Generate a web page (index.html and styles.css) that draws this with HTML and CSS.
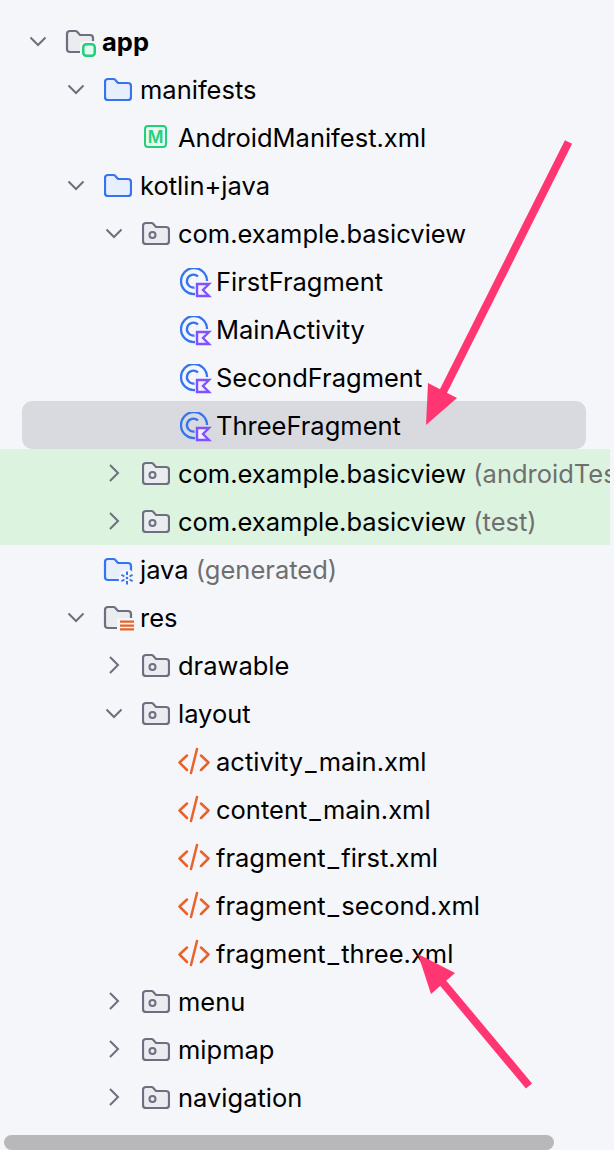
FILE: index.html
```html
<!DOCTYPE html>
<html lang="en">
<head>
  <meta charset="UTF-8" />
  <title>Project tree</title>
  <link rel="stylesheet" href="styles.css">
</head>
<body>
  <svg class="defs" width="0" height="0">
    <defs>
      <symbol id="down" viewBox="0 0 24 24"><path d="M4.500 8.500 12 16l7.500-7.500"/></symbol>
      <symbol id="right" viewBox="0 0 24 24"><path d="M8 4l8 8-8 8"/></symbol>
      <path id="folder-shape" d="M1 7a3 3 0 0 1 3-3h5.500a2 2 0 0 1 1.400.600L14 8h10a3 3 0 0 1 3 3v11a3 3 0 0 1-3 3H4a3 3 0 0 1-3-3z"/>
      <symbol id="folder-blue" viewBox="0 0 28 28"><use href="#folder-shape" class="fold-blue"/></symbol>
      <symbol id="package" viewBox="0 0 28 28">
        <use href="#folder-shape" class="fold-gray"/>
        <circle class="pkg-dot" cx="10.500" cy="16" r="3"/>
      </symbol>
      <symbol id="kt-class" viewBox="0 0 32 32">
        <path class="cls-arc" d="M15 26A13 13 0 1 1 27 13"/>
        <path class="cls-arc" d="M18 8.500A6.500 6.500 0 1 0 14.500 19.500"/>
        <path class="kt-badge" d="M17 16h12l-6 6 6 6H17z"/>
      </symbol>
      <symbol id="xml" viewBox="0 0 32 32">
        <path class="xml-tag" d="M9 9.500 1.500 16.500 9 24M23 9.500l7.500 7L23 24M19 3l-6 24"/>
      </symbol>
    </defs>
  </svg>

  <div class="tree">
    <div class="row lvl0 bold">
      <svg class="chev"><use href="#down"/></svg>
      <svg class="icon" viewBox="0 0 28 28">
        <use href="#folder-shape" class="fold-gray"/>
        <rect class="halo" x="14" y="14" width="18" height="18" rx="5"/>
        <rect class="app-badge" x="17.250" y="17.250" width="11.500" height="11.500" rx="3"/>
      </svg>
      <span>app</span>
    </div>
    <div class="row lvl1">
      <svg class="chev"><use href="#down"/></svg>
      <svg class="icon"><use href="#folder-blue"/></svg>
      <span>manifests</span>
    </div>
    <div class="row lvl2">
      <span class="chev"></span>
      <svg class="icon" viewBox="0 0 28 28">
        <rect class="m-box" x="3" y="3" width="21" height="21" rx="3"/>
        <text class="m-text" x="13.500" y="19.800">M</text>
      </svg>
      <span>AndroidManifest.xml</span>
    </div>
    <div class="row lvl1">
      <svg class="chev"><use href="#down"/></svg>
      <svg class="icon"><use href="#folder-blue"/></svg>
      <span>kotlin+java</span>
    </div>
    <div class="row lvl2">
      <svg class="chev"><use href="#down"/></svg>
      <svg class="icon"><use href="#package"/></svg>
      <span>com.example.basicview</span>
    </div>
    <div class="row lvl3">
      <span class="chev"></span>
      <svg class="icon big"><use href="#kt-class"/></svg>
      <span>FirstFragment</span>
    </div>
    <div class="row lvl3">
      <span class="chev"></span>
      <svg class="icon big"><use href="#kt-class"/></svg>
      <span>MainActivity</span>
    </div>
    <div class="row lvl3">
      <span class="chev"></span>
      <svg class="icon big"><use href="#kt-class"/></svg>
      <span>SecondFragment</span>
    </div>
    <div class="row lvl3 selected">
      <span class="chev"></span>
      <svg class="icon big"><use href="#kt-class"/></svg>
      <span>ThreeFragment</span>
    </div>
    <div class="row lvl2 green">
      <svg class="chev"><use href="#right"/></svg>
      <svg class="icon"><use href="#package"/></svg>
      <span>com.example.basicview <span class="note">(androidTest)</span></span>
    </div>
    <div class="row lvl2 green">
      <svg class="chev"><use href="#right"/></svg>
      <svg class="icon"><use href="#package"/></svg>
      <span>com.example.basicview <span class="note">(test)</span></span>
    </div>
    <div class="row lvl1">
      <span class="chev"></span>
      <svg class="icon" viewBox="0 0 28 28">
        <use href="#folder-shape" class="fold-blue"/>
        <circle class="halo" cx="23" cy="23" r="8.500"/>
        <path class="gen-star" d="M23 16.500v3.500M23 26v3.500M17.400 19.750l3 1.750M25.600 24.500l3 1.750M28.600 19.750l-3 1.750M20.400 24.500l-3 1.750"/>
        <circle class="gen-dot" cx="23" cy="23" r="1.300"/>
      </svg>
      <span>java <span class="note">(generated)</span></span>
    </div>
    <div class="row lvl1">
      <svg class="chev"><use href="#down"/></svg>
      <svg class="icon" viewBox="0 0 28 28">
        <use href="#folder-shape" class="fold-gray"/>
        <rect class="halo" x="13" y="15" width="20" height="16"/>
        <path class="res-lines" d="M16 18.600h14M16 22.600h14M16 26.400h14"/>
      </svg>
      <span>res</span>
    </div>
    <div class="row lvl2">
      <svg class="chev"><use href="#right"/></svg>
      <svg class="icon"><use href="#package"/></svg>
      <span>drawable</span>
    </div>
    <div class="row lvl2">
      <svg class="chev"><use href="#down"/></svg>
      <svg class="icon"><use href="#package"/></svg>
      <span>layout</span>
    </div>
    <div class="row lvl3">
      <span class="chev"></span>
      <svg class="icon big xml"><use href="#xml"/></svg>
      <span>activity<span class="us">_</span>main.xml</span>
    </div>
    <div class="row lvl3">
      <span class="chev"></span>
      <svg class="icon big xml"><use href="#xml"/></svg>
      <span>content<span class="us">_</span>main.xml</span>
    </div>
    <div class="row lvl3">
      <span class="chev"></span>
      <svg class="icon big xml"><use href="#xml"/></svg>
      <span>fragment<span class="us">_</span>first.xml</span>
    </div>
    <div class="row lvl3">
      <span class="chev"></span>
      <svg class="icon big xml"><use href="#xml"/></svg>
      <span>fragment<span class="us">_</span>second.xml</span>
    </div>
    <div class="row lvl3">
      <span class="chev"></span>
      <svg class="icon big xml"><use href="#xml"/></svg>
      <span>fragment<span class="us">_</span>three.xml</span>
    </div>
    <div class="row lvl2">
      <svg class="chev"><use href="#right"/></svg>
      <svg class="icon"><use href="#package"/></svg>
      <span>menu</span>
    </div>
    <div class="row lvl2">
      <svg class="chev"><use href="#right"/></svg>
      <svg class="icon"><use href="#package"/></svg>
      <span>mipmap</span>
    </div>
    <div class="row lvl2">
      <svg class="chev"><use href="#right"/></svg>
      <svg class="icon"><use href="#package"/></svg>
      <span>navigation</span>
    </div>
  </div>

  <div class="scrollbar"><div class="thumb"></div></div>

  <!-- annotation arrows drawn on top of the tree -->
  <svg class="arrows" width="614" height="1150" viewBox="0 0 614 1150">
    <path class="arrow-line" d="M568.500 142 440 398"/>
    <path class="arrow-head" d="M426 425 428 383 457 398z"/>
    <path class="arrow-line" d="M529 1086 443 983"/>
    <path class="arrow-head" d="M418 954 455 973 431 994z"/>
  </svg>
</body>
</html>
```

FILE: styles.css
```css
html, body {
  margin: 0;
  height: 100%;
}

body {
  position: relative;
  width: 614px;
  height: 1150px;
  overflow: hidden;
  background: #f5f6fa;
  color: #000;
  font-family: Inter, 'Noto Sans', sans-serif;
  font-size: 25.500px;
}

.defs {
  position: absolute;
}

.tree {
  width: 610px;
  padding-top: 17px;
  overflow: hidden;
}

.row {
  display: flex;
  align-items: center;
  height: 48px;
  white-space: nowrap;
  box-sizing: border-box;
}

.lvl0 { padding-left: 26px; }
.lvl1 { padding-left: 64px; }
.lvl2 { padding-left: 102px; }
.lvl3 { padding-left: 140px; }

.bold {
  font-weight: 700;
}

.selected {
  margin: 0 24px 0 22px;
  padding-left: 118px;
  background: #d8dadf;
  border-radius: 10px;
}

.green {
  background: #dcf3e0;
}

.note {
  color: #6f6f6f;
}

.us {
  margin: 0 2px;
}

.chev {
  flex: none;
  width: 24px;
  height: 24px;
  margin-right: 16px;
  fill: none;
  stroke: #6c707e;
  stroke-width: 2;
}

.icon {
  flex: none;
  width: 28px;
  height: 28px;
  margin-right: 8px;
  overflow: visible;
}

.icon.big {
  width: 32px;
  height: 32px;
  margin-right: 4px;
  transform: translateY(3px);
}

.icon.xml {
  margin-left: -2px;
  margin-right: 6px;
  transform: translateY(1px);
}

.fold-blue {
  fill: #e7effd;
  stroke: #3574f0;
  stroke-width: 2.200;
}

.fold-gray {
  fill: #ebecf0;
  stroke: #6c707e;
  stroke-width: 2.200;
}

.pkg-dot {
  fill: none;
  stroke: #6c707e;
  stroke-width: 2;
}

.halo {
  fill: #f5f6fa;
}

.app-badge {
  fill: #e8f8f0;
  stroke: #21d07a;
  stroke-width: 2.500;
}

.m-box {
  fill: #e9f9f1;
  stroke: #21d07a;
  stroke-width: 2;
}

.m-text {
  fill: #21d07a;
  font-size: 17px;
  font-weight: 600;
  text-anchor: middle;
}

.gen-star {
  fill: none;
  stroke: #3574f0;
  stroke-width: 2;
}

.gen-dot {
  fill: #3574f0;
}

.res-lines {
  fill: none;
  stroke: #e8622a;
  stroke-width: 2.300;
}

.cls-arc {
  fill: none;
  stroke: #3574f0;
  stroke-width: 2.300;
}

.kt-badge {
  fill: #f3eefe;
  stroke: #7f52ff;
  stroke-width: 2.400;
}

.xml-tag {
  fill: none;
  stroke: #e8622a;
  stroke-width: 2.500;
  stroke-linecap: round;
  stroke-linejoin: round;
}

.scrollbar {
  margin-top: 14px;
  height: 15px;
  padding-left: 4px;
}

.thumb {
  width: 550px;
  height: 15px;
  background: #b8b8ba;
  border-radius: 8px;
}

.arrows {
  position: absolute;
  left: 0;
  top: 0;
}

.arrow-line {
  fill: none;
  stroke: #ff3671;
  stroke-width: 8;
}

.arrow-head {
  fill: #ff3671;
}
```
